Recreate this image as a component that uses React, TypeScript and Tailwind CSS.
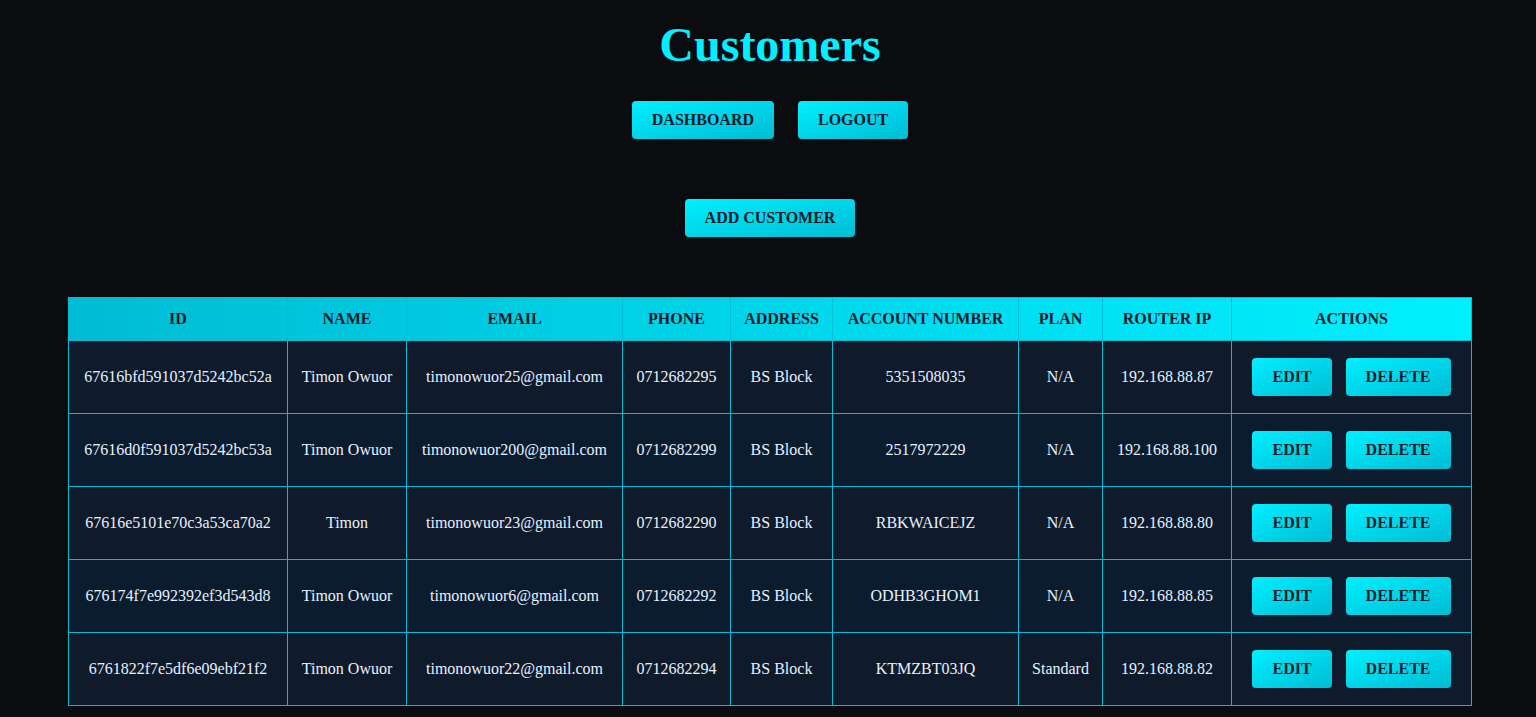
const customers = [
  {
    id: "67616bfd591037d5242bc52a",
    name: "Timon Owuor",
    email: "timonowuor25@gmail.com",
    phone: "0712682295",
    address: "BS Block",
    account: "5351508035",
    plan: "N/A",
    ip: "192.168.88.87",
  },
  {
    id: "67616d0f591037d5242bc53a",
    name: "Timon Owuor",
    email: "timonowuor200@gmail.com",
    phone: "0712682299",
    address: "BS Block",
    account: "2517972229",
    plan: "N/A",
    ip: "192.168.88.100",
  },
  {
    id: "67616e5101e70c3a53ca70a2",
    name: "Timon",
    email: "timonowuor23@gmail.com",
    phone: "0712682290",
    address: "BS Block",
    account: "RBKWAICEJZ",
    plan: "N/A",
    ip: "192.168.88.80",
  },
  {
    id: "676174f7e992392ef3d543d8",
    name: "Timon Owuor",
    email: "timonowuor6@gmail.com",
    phone: "0712682292",
    address: "BS Block",
    account: "ODHB3GHOM1",
    plan: "N/A",
    ip: "192.168.88.85",
  },
  {
    id: "6761822f7e5df6e09ebf21f2",
    name: "Timon Owuor",
    email: "timonowuor22@gmail.com",
    phone: "0712682294",
    address: "BS Block",
    account: "KTMZBT03JQ",
    plan: "Standard",
    ip: "192.168.88.82",
  },
];

const headers = [
  { label: "ID", w: "w-[219px]" },
  { label: "NAME", w: "w-[119px]" },
  { label: "EMAIL", w: "w-[216px]" },
  { label: "PHONE", w: "w-[108px]" },
  { label: "ADDRESS", w: "w-[102px]" },
  { label: "ACCOUNT NUMBER", w: "w-[186px]" },
  { label: "PLAN", w: "w-[84px]" },
  { label: "ROUTER IP", w: "w-[129px]" },
  { label: "ACTIONS", w: "" },
];

function Btn({ children, className = "" }: { children: React.ReactNode; className?: string }) {
  return (
    <button
      className={
        "h-[38px] rounded-[4px] bg-gradient-to-br from-[#00f0ff] to-[#00bcd4] px-5 text-[16px] font-bold text-[#0d1b2a] " +
        className
      }
    >
      {children}
    </button>
  );
}

export default function App() {
  return (
    <div
      className="min-h-screen bg-[#0a0c10] text-[#e6f1ff]"
      style={{ fontFamily: '"Liberation Serif", "Times New Roman", serif' }}
    >
      <div className="flex flex-col items-center pt-[17px] pl-1">
        <h1 className="text-[48px] font-bold leading-[56px] text-[#00f0ff]">Customers</h1>
        <div className="mt-[28px] flex gap-6">
          <Btn>DASHBOARD</Btn>
          <Btn>LOGOUT</Btn>
        </div>
        <div className="mt-[60px]">
          <Btn>ADD CUSTOMER</Btn>
        </div>
      </div>

      <div className="pl-[68px] pt-[60px] pb-[11px]">
        <table className="w-[1404px] border-collapse text-center text-[16px]">
          <thead>
            <tr className="h-[43px] bg-gradient-to-r from-[#00bcd4] to-[#00f0ff]">
              {headers.map((h) => (
                <th
                  key={h.label}
                  className={"border border-[#00bcd4] font-bold text-[#0d1b2a] " + h.w}
                >
                  {h.label}
                </th>
              ))}
            </tr>
          </thead>
          <tbody>
            {customers.map((c, i) => (
              <tr
                key={c.id}
                className={"h-[73px] " + (i % 2 === 0 ? "bg-[#0f1a2a]" : "bg-[#0b1c2e]")}
              >
                <td className="border border-[#00bcd4]">{c.id}</td>
                <td className="border border-[#00bcd4]">{c.name}</td>
                <td className="border border-[#00bcd4]">{c.email}</td>
                <td className="border border-[#00bcd4]">{c.phone}</td>
                <td className="border border-[#00bcd4]">{c.address}</td>
                <td className="border border-[#00bcd4]">{c.account}</td>
                <td className="border border-[#00bcd4]">{c.plan}</td>
                <td className="border border-[#00bcd4]">{c.ip}</td>
                <td className="border border-[#00bcd4]">
                  <div className="flex justify-center gap-[14px]">
                    <Btn>EDIT</Btn>
                    <Btn>DELETE</Btn>
                  </div>
                </td>
              </tr>
            ))}
          </tbody>
        </table>
      </div>
    </div>
  );
}
